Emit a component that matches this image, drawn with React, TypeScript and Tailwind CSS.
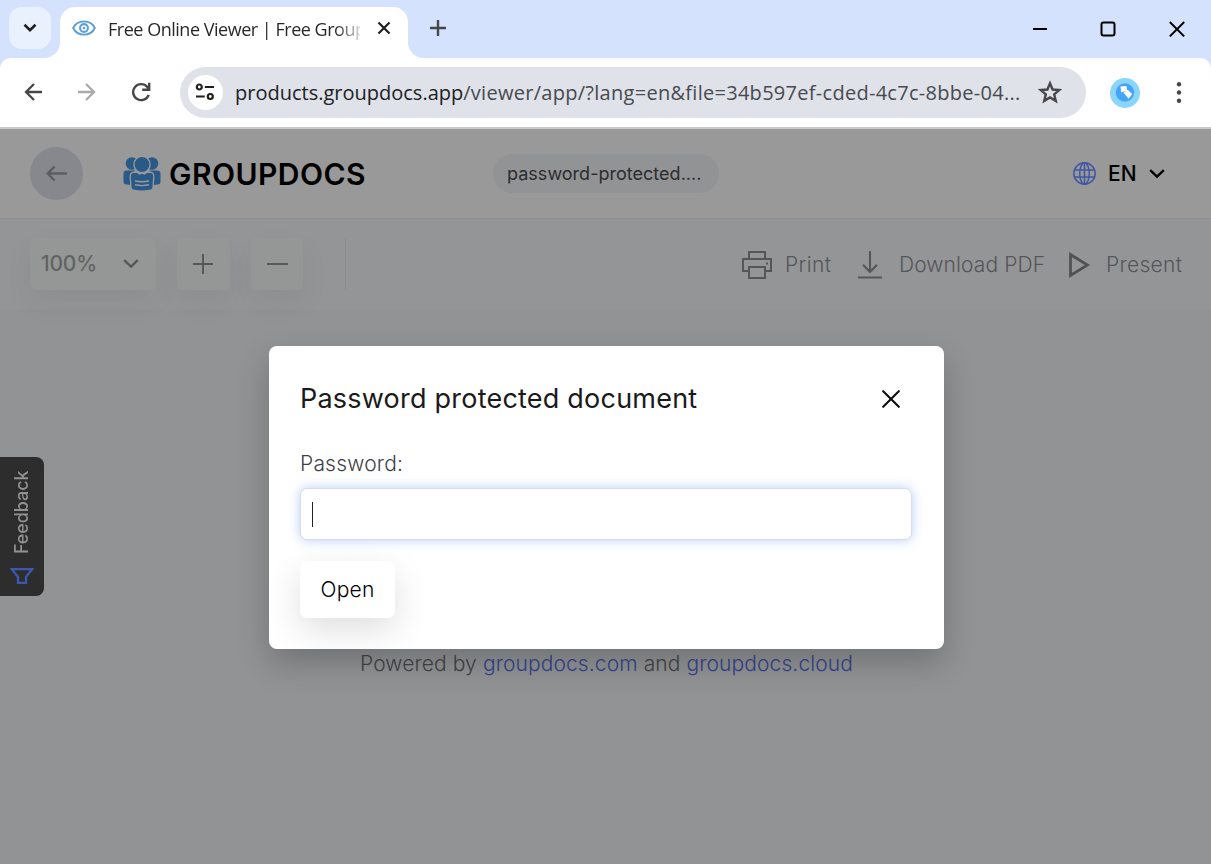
import React from "react";

function TabStrip() {
  return (
    <div className="relative flex h-[58px] bg-[#d5e2fd]">
      <button className="ml-[9px] mt-[7px] flex h-[42px] w-[42px] items-center justify-center rounded-[13px] bg-[#eaf1fe]">
        <svg width="14" height="10" viewBox="0 0 14 10" fill="none" stroke="#1f1f1f" strokeWidth="2.6">
          <path d="M1.500 1.800 7 7.200l5.500-5.400" />
        </svg>
      </button>
      <svg className="mt-[42px] ml-[-7px] shrink-0" width="16" height="16" viewBox="0 0 16 16">
        <path d="M16 0v16H0C9 16 16 9 16 0Z" fill="#fff" />
      </svg>
      <div className="mt-[7px] flex h-[51px] w-[348px] items-center rounded-t-[15px] bg-white pl-[12px]">
        <svg className="-mt-[9px] shrink-0" width="24" height="16" viewBox="0 0 24 16" fill="none" stroke="#5a9fd6">
          <path d="M1.200 8C5.500-.8 18.500-.8 22.800 8 18.500 16.800 5.500 16.800 1.200 8Z" strokeWidth="1.900" />
          <circle cx="12" cy="8" r="3.900" strokeWidth="2.100" />
          <circle cx="12" cy="8" r="1.300" fill="#5a9fd6" stroke="none" />
        </svg>
        <div className="-mt-[7px] ml-[12px] w-[252px] whitespace-nowrap bg-linear-to-r from-[#262626] from-90% to-[#d8d8d8] to-100% bg-clip-text font-['Open_Sans',sans-serif] text-[18px] leading-7 tracking-[-0.48px] text-transparent">
          Free Online Viewer | Free Group
        </div>
        <svg className="-mt-[9px] ml-[17px] shrink-0" width="14" height="14" viewBox="0 0 14 14" stroke="#1f1f1f" strokeWidth="2.200">
          <path d="m1.500 1.500 11 11m0-11-11 11" />
        </svg>
      </div>
      <svg className="mt-[42px] shrink-0" width="16" height="16" viewBox="0 0 16 16">
        <path d="M0 0v16h16C7 16 0 9 0 0Z" fill="#fff" />
      </svg>
      <svg className="mt-[20px] ml-[6px] shrink-0" width="16" height="16" viewBox="0 0 16 16" stroke="#474747" strokeWidth="2.400">
        <path d="M8 0v16M0 8h16" />
      </svg>
      <div className="ml-auto mr-[26px] mt-[21px] flex h-4 items-center gap-[53px]">
        <svg width="15" height="16" viewBox="0 0 15 16" stroke="#000" strokeWidth="2"><path d="M1 8h15" /></svg>
        <svg width="16" height="16" viewBox="0 0 16 16" fill="none" stroke="#000" strokeWidth="2"><rect x="1.500" y="1.500" width="13" height="13" rx="2" /></svg>
        <svg width="16" height="16" viewBox="0 0 16 16" stroke="#000" strokeWidth="1.900"><path d="m.8 1 14.400 14.400m0-14.400L.8 15.400" /></svg>
      </div>
    </div>
  );
}

function AddressBar() {
  return (
    <div className="h-[71px] bg-[#d5e2fd]">
      <div className="flex h-[71px] items-start rounded-t-[11px] border-b-2 border-[#c9c9c9] bg-white pt-[9px]">
        <div className="flex h-[51px] w-[180px] items-center pb-px pl-[24px]">
          <svg width="18" height="18" viewBox="0 0 18 18" fill="none" stroke="#474747" strokeWidth="2.300">
            <path d="M18 9H2M10 1 2 9l8 8" />
          </svg>
          <svg className="ml-[36px]" width="18" height="18" viewBox="0 0 18 18" fill="none" stroke="#aaaaaa" strokeWidth="2.300">
            <path d="M0 9h16M8 1l8 8-8 8" />
          </svg>
          <svg className="ml-[35px]" width="20" height="20" viewBox="0 0 20 20" fill="none" stroke="#474747" strokeWidth="2.400">
            <path d="M17.700 12.800A8 8 0 1 1 16.300 5L18 7M18.200.8v7h-7" />
          </svg>
        </div>
        <div className="flex h-[51px] w-[906px] items-center rounded-full bg-[#dfe2e9] pl-[8px]">
          <div className="flex h-[35px] w-[35px] shrink-0 items-center justify-center rounded-full bg-white">
            <svg className="-ml-px -mt-px" width="20" height="18" viewBox="0 0 20 18" fill="none" stroke="#1f1f1f" strokeWidth="2.200">
              <circle cx="4.300" cy="4" r="2.500" />
              <path d="M9.800 4H19M1 13.500h8.700" />
              <circle cx="15.300" cy="13.500" r="2.500" />
            </svg>
          </div>
          <div className="ml-[12px] w-[784px] whitespace-nowrap font-['Open_Sans',sans-serif] text-[20px] leading-8 tracking-[0.28px] text-[#474a4f]">
            <span className="tracking-normal text-[#202124]">products.groupdocs.app</span>/viewer/app/?lang=en&amp;file=34b597ef-cded-4c7c-8bbe-04...
          </div>
          <svg className="-mt-[2px] ml-[19px] shrink-0" width="24" height="24" viewBox="0 0 24 24" fill="none" stroke="#474747" strokeWidth="2.400">
            <path d="m12 3.300 2.600 6.200 6.700.5-5.100 4.400 1.600 6.500-5.800-3.500-5.800 3.500 1.600-6.500L2.700 10l6.700-.5z" />
          </svg>
        </div>
        <svg className="ml-[24px] mt-[11px]" width="30" height="30" viewBox="0 0 30 30">
          <circle cx="15" cy="15" r="15" fill="#89d5fb" />
          <circle cx="15" cy="14.500" r="9.200" fill="#42a5f9" />
          <path d="m10.500 8.500 6-.5.600 4.500-6 2zM13.500 14.500l4.300-2.500 4.400 4-3.700 4.700z" fill="#fff" />
        </svg>
        <svg className="ml-[36px] mt-[15px]" width="6" height="22" viewBox="0 0 6 22" fill="#474747">
          <circle cx="3" cy="2.200" r="2.200" />
          <circle cx="3" cy="10.500" r="2.200" />
          <circle cx="3" cy="18.800" r="2.200" />
        </svg>
      </div>
    </div>
  );
}

function GroupIcon() {
  return (
    <svg width="38" height="36" viewBox="0 0 38 36" fill="#295a87">
      <circle cx="9" cy="7.500" r="6.300" />
      <circle cx="29" cy="7.500" r="6.300" />
      <path d="M.5 18c0-2.500 1-3.500 3-3.500h8V29.500L3.500 28.500C1.500 28.200.5 27.500.5 25.500z" />
      <path d="M37.500 18c0-2.500-1-3.500-3-3.500h-8v15l8-1c2-.3 3-1 3-3z" />
      <path d="M7.200 21c0-3.500 1.500-4.800 4-4.800l3 .1 2.300 1.700 2.500-1.200 2.500 1.200 2.300-1.700 3-.1c2.500 0 4 1.300 4 4.800l-.8 10.500c-.3 2-1.300 2.700-3.300 3q-7.700 1.500-15.400 0c-2-.3-3-1-3.300-3z" stroke="#999" strokeWidth="1.300" />
      <circle cx="19" cy="8.500" r="8.100" stroke="#999" strokeWidth="1.300" />
      <path d="M12 25q7 1.600 14 0M12 28.800q7 1.600 14 0" stroke="#999" strokeWidth="1.400" fill="none" />
    </svg>
  );
}

function AppHeader() {
  return (
    <header className="flex h-[90px] items-center border-b border-[#8e8e8e] bg-[#999999]">
      <button className="ml-[30px] flex h-[53px] w-[53px] items-center justify-center rounded-full bg-[#86888d]">
        <svg width="21" height="16" viewBox="0 0 21 16" fill="none" stroke="#5b5d61" strokeWidth="2.400">
          <path d="M21 7.500H2M8.500.5 1.800 7.500l6.700 7" />
        </svg>
      </button>
      <div className="ml-[40px] flex w-[370px] items-center">
        <GroupIcon />
        <span className="ml-[8px] whitespace-nowrap font-['Inter',sans-serif] text-[30px] leading-9 font-semibold tracking-[0.45px] text-black">GROUPDOCS</span>
      </div>
      <div className="flex h-[39px] w-[226px] items-center rounded-full bg-[#929395] pl-[14px] font-['Inter',sans-serif] text-[18px] tracking-[0.02px] text-[#2c2c2e]">
        password-protected....
      </div>
      <div className="ml-auto mr-[46px] flex items-center">
        <svg width="23" height="23" viewBox="0 0 23 23" fill="none" stroke="#3f57a3" strokeWidth="1.500">
          <circle cx="11.500" cy="11.500" r="10.700" />
          <ellipse cx="11.500" cy="11.500" rx="4.800" ry="10.700" />
          <path d="M11.500.8v21.400M1.500 8h20M1.500 15h20" />
        </svg>
        <span className="ml-[12px] w-[29px] font-['Inter',sans-serif] text-[21px] leading-7 font-medium text-black">EN</span>
        <svg className="ml-[12px]" width="16" height="10" viewBox="0 0 16 10" fill="none" stroke="#000" strokeWidth="2.400">
          <path d="m1.200 1.200 6.800 6.500 6.800-6.500" />
        </svg>
      </div>
    </header>
  );
}

function ViewerToolbar() {
  return (
    <div className="flex h-[90px] items-center bg-[#949597] pr-[28px] font-['Inter',sans-serif] text-[21px] font-light text-[#555657]">
      <button className="ml-[30px] flex h-[52px] w-[126px] items-center rounded-[6px] bg-[#959796] pl-[11px] font-medium text-[#616363] shadow-[0_12px_30px_rgba(0,0,0,0.05)]">
        <span className="w-[71px] text-left text-[21px] tracking-[-0.2px]">100%</span>
        <svg className="ml-[11px]" width="16" height="10" viewBox="0 0 16 10" fill="none" stroke="#555757" strokeWidth="2.300">
          <path d="m1.200 1.200 6.800 6.500 6.800-6.500" />
        </svg>
      </button>
      <button className="ml-[21px] flex h-[52px] w-[53px] items-center justify-center rounded-[6px] bg-[#959796] shadow-[0_12px_30px_rgba(0,0,0,0.05)]">
        <svg width="21" height="21" viewBox="0 0 21 21" stroke="#555757" strokeWidth="1.900"><path d="M10 0v20M0 10h20" /></svg>
      </button>
      <button className="ml-[21px] flex h-[52px] w-[52px] items-center justify-center rounded-[6px] bg-[#959796] shadow-[0_12px_30px_rgba(0,0,0,0.05)]">
        <svg width="21" height="21" viewBox="0 0 21 21" stroke="#555757" strokeWidth="1.900"><path d="M0 10h21" /></svg>
      </button>
      <div className="ml-[42px] h-[52px] w-px bg-[#8c8d8f]" />
      <div className="ml-auto flex items-center pt-px">
        <svg width="30" height="28" viewBox="0 0 30 28" fill="none" stroke="#555657" strokeWidth="2">
          <path d="M7 8V1h16v7M7 20H1V8h28v12h-6" />
          <path d="M7 16h16v11H7z" />
          <path d="M24 12.500h2" />
        </svg>
        <span className="ml-[13px] w-[47px] whitespace-nowrap tracking-[0.4px]">Print</span>
        <svg className="ml-[26px]" width="24" height="28" viewBox="0 0 24 28" fill="none" stroke="#555657" strokeWidth="2.100">
          <path d="M12 0v20.500M5 13.800l7 7.200 7-7.200M0 26.500h24" />
        </svg>
        <span className="ml-[17px] w-[145px] whitespace-nowrap tracking-[0.1px]">Download PDF</span>
        <svg className="ml-[25px]" width="21" height="26" viewBox="0 0 21 26" fill="none" stroke="#505152" strokeWidth="2.700">
          <path d="M1.500 2.500v21L18.500 13z" />
        </svg>
        <span className="ml-[16px] w-[77px] whitespace-nowrap tracking-[0.3px]">Present</span>
      </div>
    </div>
  );
}

function FeedbackTab() {
  return (
    <button className="absolute left-0 top-[457px] flex h-[139px] w-[44px] flex-col items-center rounded-r-[8px] bg-[#2d2d2d] pt-[13px]">
      <span className="h-[84px] rotate-180 font-['Inter',sans-serif] text-[18px] leading-[22px] font-medium tracking-[-0.1px] text-[#929292] [writing-mode:vertical-rl]">Feedback</span>
      <svg className="mt-[14px]" width="24" height="16" viewBox="0 0 24 16" fill="none" stroke="#3b57ae" strokeWidth="2.300">
        <path d="M1.800 1.200h20.400L16 9v5.800H8V9z" />
      </svg>
    </button>
  );
}

function PasswordDialog() {
  return (
    <section className="relative z-10 h-[303px] w-[675px] rounded-[8px] bg-white px-[31px] font-['Inter',sans-serif] shadow-[0_14px_32px_rgba(0,0,0,0.22)]">
      <div className="flex items-center pt-[35px]">
        <h1 className="whitespace-nowrap text-[27px] leading-[36px] tracking-[0.22px] text-[#1a1a1c]">Password protected document</h1>
        <svg className="-mt-px ml-auto mr-[13px]" width="18" height="18" viewBox="0 0 18 18" stroke="#0e0e10" strokeWidth="2.100" strokeLinecap="round">
          <path d="m1.200 1.200 15.600 15.600m0-15.600L1.200 16.800" />
        </svg>
      </div>
      <div className="mt-[32px] text-[21px] leading-[30px] font-light tracking-[0.2px] text-[#3f3f46]">Password:</div>
      <div className="mt-[9px] flex h-[52px] w-[612px] items-center rounded-[7px] border border-[#d9dce6] bg-white pl-[11px] shadow-[0_0_12px_rgba(60,120,245,0.36)]">
        <div className="h-[25px] w-px bg-[#222]" />
      </div>
      <button className="mt-[21px] flex h-[57px] w-[95px] items-center justify-center rounded-[7px] bg-white text-[21px] font-light tracking-[0.2px] text-black shadow-[0_12px_34px_rgba(0,0,0,0.13)]">Open</button>
    </section>
  );
}

export default function App() {
  return (
    <div className="relative flex h-[864px] w-[1211px] flex-col overflow-hidden bg-[#929395]">
      <TabStrip />
      <AddressBar />
      <AppHeader />
      <ViewerToolbar />
      <main className="flex flex-1 flex-col pt-[37px]">
        <div className="ml-[269px]"><PasswordDialog /></div>
        <p className="ml-[360px] whitespace-nowrap font-['Inter',sans-serif] text-[21px] leading-[30px] font-light tracking-[0.1px] text-[#444548]">
          Powered by <a className="text-[#35458f]">groupdocs.com</a> and <a className="text-[#35458f]">groupdocs.cloud</a>
        </p>
      </main>
      <FeedbackTab />
    </div>
  );
}
